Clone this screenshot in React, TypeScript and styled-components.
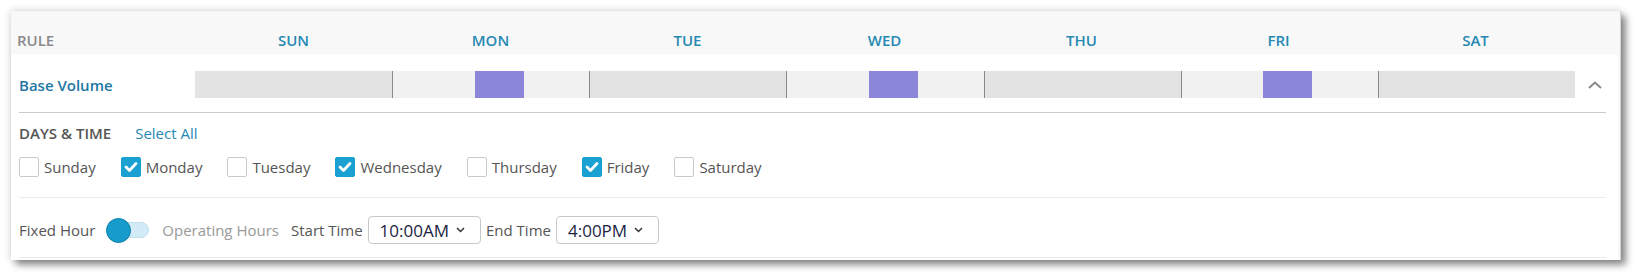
import React from "react"
import styled, { createGlobalStyle } from "styled-components"

const GlobalStyle = createGlobalStyle`
    body {
        margin: 0;
        background: #fff;
        font-family: "Open Sans", "Liberation Sans", sans-serif;
    }
`

const Page = styled.div`
    padding: 11px 20px 20px 11px;
`

const Card = styled.div`
    width: 1610px;
    background: #f8f8f8;
    border-right: 1px solid #d4d4d4;
    box-sizing: border-box;
    box-shadow: 0 0 8px rgba(0, 0, 0, 0.18), 5px 5px 7px rgba(0, 0, 0, 0.42);
`

const Header = styled.div`
    display: grid;
    grid-template-columns: 178px repeat(7, 1fr) 46px;
    height: 43px;
    padding: 19px 0 0 6px;
    box-sizing: border-box;
    font-size: 15px;
    line-height: 20px;
    font-weight: 600;
`

const HeadCell = styled.div<{ $muted?: boolean }>`
    color: ${p => (p.$muted ? "#8a8a8a" : "#2688b3")};
    text-align: ${p => (p.$muted ? "left" : "center")};
`

const Panel = styled.div`
    background: #fff;
    margin-right: 2px;
    padding-bottom: 2px;
    border-top-right-radius: 3px;
`

const RuleRow = styled.div`
    display: grid;
    grid-template-columns: 176px 1380px 1fr;
    align-items: center;
    margin: 0 12px 0 8px;
    padding: 17px 0 14px;
    border-bottom: 1px solid #cbcbcb;
`

const RuleName = styled.div`
    font-size: 15px;
    font-weight: 600;
    color: #1f78a3;
`

const Bar = styled.div`
    display: grid;
    grid-template-columns: repeat(7, 1fr);
    height: 27px;
`

const DaySlot = styled.div<{ $dark: boolean; $first: boolean }>`
    position: relative;
    background: ${p => (p.$dark ? "#e3e3e3" : "#f1f1f1")};
    border-left: ${p => (p.$first ? "none" : "1px solid #8a8a8a")};
`

const Block = styled.div`
    position: absolute;
    top: 0;
    bottom: 0;
    background: #8b86da;
`

const Collapse = styled.div`
    display: flex;
    justify-content: center;
    padding-left: 9px;
`

const Section = styled.div`
    margin: 0 12px 0 8px;
    padding: 10px 0 20px;
    border-bottom: 1px solid #ececec;
`

const TitleRow = styled.div`
    display: flex;
    align-items: center;
    gap: 24px;
    height: 20px;
    font-size: 15px;
    line-height: 20px;
`

const Title = styled.span`
    font-weight: 600;
    color: #555;
`

const Link = styled.span`
    color: #2688b3;
`

const DayList = styled.div`
    display: flex;
    align-items: center;
    margin-top: 14px;
`

const DayItem = styled.label`
    display: flex;
    align-items: center;
    gap: 5px;
    margin-right: 25px;
    font-size: 15px;
    color: #555;
`

const Box = styled.span<{ $on: boolean }>`
    display: inline-flex;
    align-items: center;
    justify-content: center;
    width: 20px;
    height: 20px;
    box-sizing: border-box;
    border-radius: 2px;
    border: 1px solid ${p => (p.$on ? "#1a9fd0" : "#c9c9c9")};
    background: ${p => (p.$on ? "#1aa0d1" : "#fff")};
`

const TimeRow = styled.div`
    display: flex;
    align-items: center;
    gap: 5px;
    margin: 0 12px 0 8px;
    padding: 18px 0 13px;
    border-bottom: 1px solid #ececec;
    font-size: 15px;
    color: #555;
`

const Muted = styled.span`
    color: #999;
    margin-right: 7px;
`

const Toggle = styled.span`
    position: relative;
    display: inline-flex;
    align-items: center;
    width: 43px;
    height: 25px;
    margin: 0 8px 0 6px;
`

const Track = styled.span`
    margin-left: 4px;
    width: 39px;
    height: 16px;
    box-sizing: border-box;
    border-radius: 8px;
    background: #d2ebf6;
    border: 1px solid #bfdfed;
`

const Knob = styled.span`
    position: absolute;
    left: 0;
    top: 0;
    width: 25px;
    height: 25px;
    box-sizing: border-box;
    border-radius: 50%;
    background: #169bcb;
    border: 1px solid #0f7fa9;
`

const Select = styled.div`
    display: inline-flex;
    align-items: center;
    gap: 7px;
    height: 28px;
    box-sizing: border-box;
    padding: 0 15px 0 11px;
    border: 1px solid #c8c8c8;
    border-radius: 4px;
    font-size: 17px;
    color: #1c2442;
`

const days = ["SUN", "MON", "TUE", "WED", "THU", "FRI", "SAT"]
const names = ["Sunday", "Monday", "Tuesday", "Wednesday", "Thursday", "Friday", "Saturday"]
const picked = [false, true, false, true, false, true, false]

const Check = () => (
    <svg width="14" height="12" viewBox="0 0 14 12">
        <polyline points="2,6 5.5,9.5 12,2.5" fill="none" stroke="#fff" strokeWidth="2.8" strokeLinecap="round" strokeLinejoin="round" />
    </svg>
)

const Caret = () => (
    <svg width="9" height="6" viewBox="0 0 9 6">
        <polyline points="1,1 4.5,4.5 8,1" fill="none" stroke="#333" strokeWidth="1.5" />
    </svg>
)

export default function App() {
    return (
        <>
            <GlobalStyle />
            <Page>
                <Card>
                    <Header>
                        <HeadCell $muted>RULE</HeadCell>
                        {days.map(d => <HeadCell key={d}>{d}</HeadCell>)}
                    </Header>
                    <Panel>
                        <RuleRow>
                            <RuleName>Base Volume</RuleName>
                            <Bar>
                                {days.map((d, i) => (
                                    <DaySlot key={d} $dark={i % 2 === 0} $first={i === 0}>
                                        {picked[i] && <Block style={{ left: `${(10 / 24) * 100}%`, width: `${(6 / 24) * 100}%` }} />}
                                    </DaySlot>
                                ))}
                            </Bar>
                            <Collapse>
                                <svg width="14" height="8" viewBox="0 0 14 8">
                                    <polyline points="1,7 7,1.5 13,7" fill="none" stroke="#8a8a8a" strokeWidth="2" />
                                </svg>
                            </Collapse>
                        </RuleRow>
                        <Section>
                            <TitleRow>
                                <Title>DAYS &amp; TIME</Title>
                                <Link>Select All</Link>
                            </TitleRow>
                            <DayList>
                                {names.map((n, i) => (
                                    <DayItem key={n}>
                                        <Box $on={picked[i]}>{picked[i] && <Check />}</Box>
                                        {n}
                                    </DayItem>
                                ))}
                            </DayList>
                        </Section>
                        <TimeRow>
                            <span>Fixed Hour</span>
                            <Toggle>
                                <Track />
                                <Knob />
                            </Toggle>
                            <Muted>Operating Hours</Muted>
                            <span>Start Time</span>
                            <Select>10:00AM <Caret /></Select>
                            <span>End Time</span>
                            <Select>4:00PM <Caret /></Select>
                        </TimeRow>
                    </Panel>
                </Card>
            </Page>
        </>
    )
}
